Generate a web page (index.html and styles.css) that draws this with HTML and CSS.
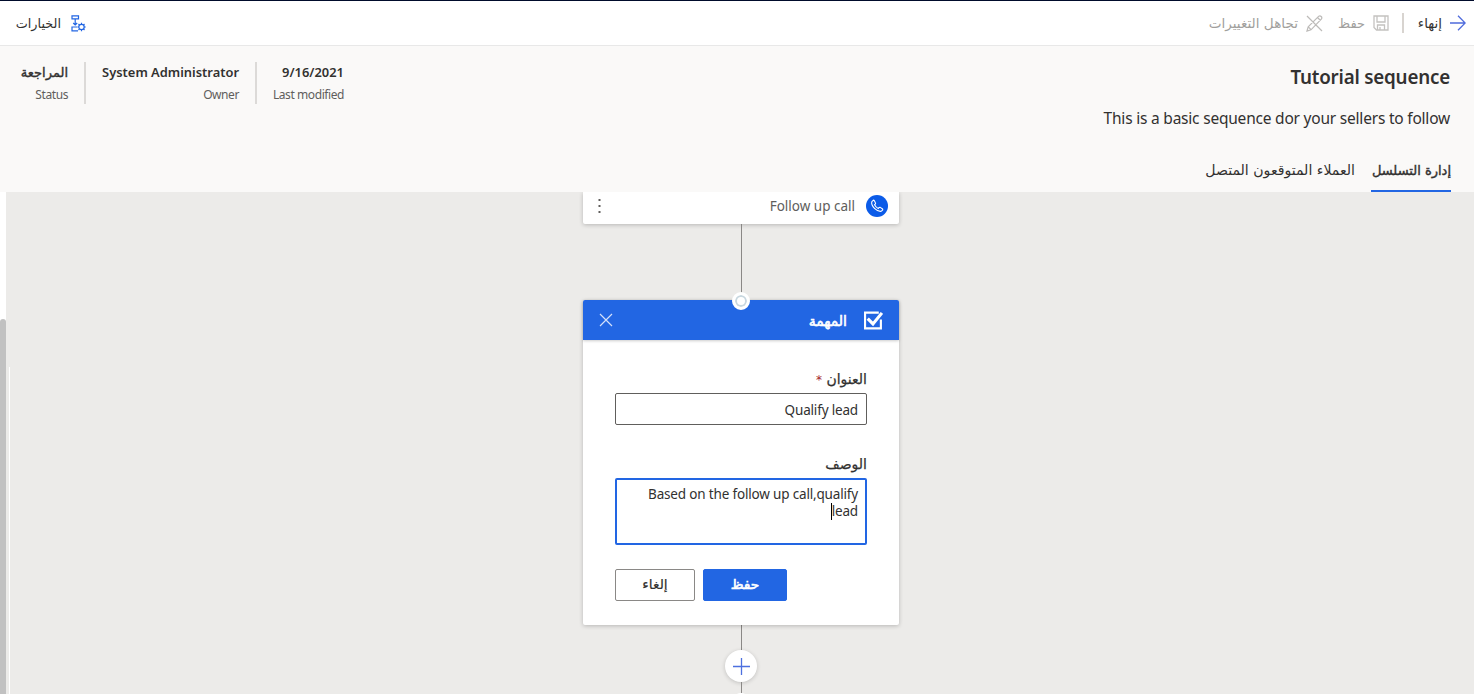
FILE: index.html
```html
<!DOCTYPE html>
<html lang="ar" dir="rtl">
<head>
<meta charset="utf-8">
<title>Tutorial sequence</title>
<link rel="stylesheet" href="styles.css">
</head>
<body>
<header class="toolbar">
  <div class="tools">
    <svg class="icon arrow" viewBox="0 0 16 16"><path d="M0 8H15M8 .8L15.200 8 8 15.200" fill="none" stroke="#4f6bdc" stroke-width="1.300"/></svg>
    <span class="label finish">إنهاء</span>
    <i class="tool-separator"></i>
    <svg class="icon save-icon" viewBox="0 0 16 16"><path d="M1 1h14v14H3.500L1 12.500zM4 1v6h8V1M4.500 15v-5h7v5M7 12v3" fill="none" stroke="#c4c2c0" stroke-width="1.300"/></svg>
    <span class="label save-label muted">حفظ</span>
    <svg class="icon discard-icon" viewBox="0 0 17 17"><path d="M1 1l15 15M1 16l1.200-4.200L12.800 1.200q1.300-.8 2.400.3t.3 2.400L5 14.800zM2.300 11.800l3 3M11.500 2.500l3 3" fill="none" stroke="#bdbbb9" stroke-width="1.200"/></svg>
    <span class="label discard-label muted">تجاهل التغييرات</span>
  </div>
  <div class="tools options">
    <svg class="icon options-icon" viewBox="0 0 16 17"><g fill="none" stroke="#2266e3" stroke-width="1.200"><path d="M1 .8h6.500v3H1zM4.200 4v6M2.200 8l2 2 2-2M6 12H1v3.800h6"/><circle cx="10.500" cy="12" r="2.700"/><path d="M10.500 7.800v1.500M10.500 14.700v1.500M6.300 12h1.500M13.200 12h1.500M7.500 9l1.100 1.100M12.400 13.900l1.100 1.100M13.500 9l-1.100 1.100M8.600 13.900L7.500 15"/></g></svg>
    <span class="label options-label">الخيارات</span>
  </div>
</header>

<section class="summary">
  <div class="heading">
    <h1 dir="ltr">Tutorial sequence</h1>
    <p dir="ltr">This is a basic sequence dor your sellers to follow</p>
    <nav class="tabs">
      <a class="tab active"><span>إدارة التسلسل</span></a>
      <a class="tab connected"><span>العملاء المتوقعون المتصل</span></a>
    </nav>
  </div>
  <div class="facts">
    <div class="fact modified"><b dir="ltr">9/16/2021</b><small>Last modified</small></div>
    <div class="fact owner"><b dir="ltr">System Administrator</b><small>Owner</small></div>
    <div class="fact status"><b class="status-value">المراجعة</b><small>Status</small></div>
  </div>
</section>

<main class="canvas">
  <div class="flow">
    <article class="card previous">
      <svg class="call-icon" viewBox="0 0 22 22"><circle cx="11" cy="11" r="11" fill="#0b5be8"/><path d="M7.200 5.300L5.800 6.700Q5 10 8.500 13.400T15.200 16.300L16.700 14.900Q17 14.200 16.300 13.700L14.200 12.400Q13.500 12.200 13 12.700L12.200 13.500Q10 12.500 8.500 9.800L9.400 8.900Q9.800 8.300 9.400 7.700L8.200 5.500Q7.700 5 7.200 5.300z" fill="none" stroke="#fff" stroke-width="1.100"/></svg>
      <span class="previous-title" dir="ltr">Follow up call</span>
      <svg class="more" viewBox="0 0 3 14"><path d="M.5 0h2v2h-2zM.5 6h2v2h-2zM.5 12h2v2h-2z" fill="#605e5c"/></svg>
    </article>
    <i class="connector"></i>
    <article class="card task">
      <i class="node"></i>
      <header class="task-head">
        <svg class="check-icon" viewBox="0 0 18 18"><path d="M14 1.500H1v15h15V8" fill="none" stroke="#fff" stroke-width="2"/><path d="M3.500 7.200l5 5L17 1.800" fill="none" stroke="#fff" stroke-width="3"/></svg>
        <strong class="task-title">المهمة</strong>
        <svg class="close" viewBox="0 0 14 14"><path d="M1 1l12 12M13 1L1 13" stroke="#d3e0fa" stroke-width="1.200"/></svg>
      </header>
      <div class="form">
        <label class="field-label">العنوان <em>*</em></label>
        <div class="input title-input"><span dir="ltr">Qualify lead</span></div>
        <label class="field-label second">الوصف</label>
        <div class="input area"><span dir="ltr">Based on the follow up call,qualify</span><span class="last-line" dir="ltr">lead</span></div>
        <div class="actions">
          <button class="button primary"><span>حفظ</span></button>
          <button class="button"><span>إلغاء</span></button>
        </div>
      </div>
    </article>
    <i class="connector short"></i>
    <div class="add"><svg viewBox="0 0 17 17"><path d="M0 8.500h17M8.500 0v17" stroke="#4d70df" stroke-width="1.300"/></svg></div>
    <i class="connector tail"></i>
    <i class="next-node"></i>
  </div>
  <i class="panel-line"></i>
  <aside class="scrollbar"><i class="thumb"></i></aside>
</main>
</body>
</html>
```
FILE: styles.css
```css
* { box-sizing: border-box; }
body { margin: 0; width: 1474px; height: 694px; overflow: hidden; display: flex; flex-direction: column; background: #faf9f8; color: #323130; font: 13.5px/20px "Noto Sans", "DejaVu Sans", sans-serif; }
svg { display: block; flex: none; }
i, em { font-style: normal; }

.toolbar { height: 46px; flex: none; display: flex; justify-content: space-between; background: #fff; border-top: 1px solid #000b2b; border-bottom: 1px solid #e8e8e8; padding: 0 8px 0 16px; }
.tools { display: flex; align-items: center; }
.icon { width: 16px; height: 16px; }
.label { white-space: nowrap; font: 13px/20px "DejaVu Sans", sans-serif; display: block; padding-top: 1px; }
.muted { color: #a19f9d; }
.finish { width: 24px; margin-right: 8px; padding-top: 0; font-size: 13.5px; }
.tool-separator { width: 2px; height: 20px; background: #d8d4d0; margin: 0 14px 0 13px; }
.save-label { width: 27px; margin-right: 8px; }
.discard-icon { width: 17px; height: 17px; margin-right: 15px; }
.discard-label { width: 90px; margin-right: 8px; padding-top: 0; font-size: 13.6px; }
.options-icon { width: 16px; height: 17px; margin-left: 10px; }
.options-label { width: 45px; font-size: 12.8px; }

.summary { height: 146px; flex: none; display: flex; justify-content: space-between; padding: 0 24px 0 20px; }
.heading { width: 360px; }
h1 { margin: 19px 0 0; font-size: 18.8px; letter-spacing: -.2px; line-height: 24px; font-weight: 600; text-align: right; white-space: nowrap; }
.heading p { margin: 18px 0 0; font-size: 15.5px; letter-spacing: -.21px; line-height: 22px; text-align: right; white-space: nowrap; }
.tabs { display: flex; gap: 16px; margin: 21px -1px 0 0; }
.tab { width: 80px; height: 42px; white-space: nowrap; font: 13px/42px "DejaVu Sans", sans-serif; }
.tab.active { border-bottom: 2px solid #2266e3; -webkit-text-stroke: .4px; }
.tab.connected { width: 151px; font-size: 14.1px; line-height: 40px; }
.facts { display: flex; height: 42px; margin-top: 16px; }
.fact { display: flex; flex-direction: column; text-align: right; direction: ltr; white-space: nowrap; }
.fact b { font-weight: 600; font-size: 12.9px; line-height: 20px; }
.fact small { font-size: 12px; line-height: 18px; margin-top: 4px; color: #605e5c; letter-spacing: -.42px; }
.modified { width: 89px; border-left: 2px solid #dcdad8; }
.owner { width: 171px; padding-right: 16px; border-left: 2px solid #dcdad8; }
.status { width: 64px; padding-right: 16px; }
.fact .status-value { font: 13px/22px "DejaVu Sans", sans-serif; height: 20px; -webkit-text-stroke: .4px; }

.canvas { position: relative; flex: 1; min-height: 0; background: #ecebe9; overflow: hidden; }
.flow { width: 316px; margin-left: 583px; margin-right: 575px; display: flex; flex-direction: column; align-items: center; }
.card { width: 316px; flex: none; background: #fff; border-radius: 2px; box-shadow: 0 1px 4px rgba(0,0,0,.22); }
.previous { height: 32px; display: flex; align-items: center; padding: 0 11px 4px 14px; border-radius: 0 0 2px 2px; }
.call-icon { width: 22px; height: 22px; }
.previous-title { margin-right: 11px; color: #605e5c; white-space: nowrap; }
.more { width: 3px; height: 14px; margin-right: auto; margin-left: 1px; }
.connector { width: 1px; height: 76px; flex: none; background: #8a8886; }
.task { position: relative; height: 325px; }
.node { position: absolute; left: 149px; top: -8px; width: 18px; height: 18px; border-radius: 50%; border: 3px solid #fff; background: #fff; box-shadow: inset 0 0 0 2px #c8d7df; }
.task-head { height: 40px; display: flex; align-items: center; padding: 0 16px 0 16px; background: #2266e3; color: #fff; border-radius: 2px 2px 0 0; box-shadow: 0 1px 3px rgba(0,0,0,.2); }
.check-icon { width: 19px; height: 19px; }
.task-title { margin-right: 17px; font: 14px/20px "DejaVu Sans", sans-serif; padding-top: 1px; -webkit-text-stroke: .6px; white-space: nowrap; }
.close { width: 14px; height: 14px; margin-right: auto; }
.form { padding: 29px 32px 0; }
.field-label { display: block; height: 20px; font: 14px/20px "DejaVu Sans", sans-serif; -webkit-text-stroke: .25px; }
.field-label em { color: #a4262c; font-size: 12px; -webkit-text-stroke: 0; }
.second { margin-top: 29px; }
.input { height: 32px; margin-top: 4px; border: 1px solid #605e5c; border-radius: 2px; padding: 7px 8px; display: flex; flex-direction: column; align-items: flex-start; font-size: 13.5px; letter-spacing: -.17px; line-height: 17px; white-space: nowrap; }
.title-input { padding-top: 8px; }
.input.area { height: 67px; border: 2px solid #2266e3; padding: 6px 7px; }
.last-line { border-left: 1px solid #000; }
.actions { display: flex; gap: 8px; margin-top: 24px; padding-right: 80px; }
.button { width: 80px; height: 32px; padding: 0 0 2px; border: 1px solid #8a8886; border-radius: 2px; background: #fff; color: #323130; font: 13.8px/28px "DejaVu Sans", sans-serif; -webkit-text-stroke: .2px; }
.primary { width: 84px; border-color: #2266e3; background: #2266e3; color: #fff; -webkit-text-stroke: .6px; }
.short { height: 25px; }
.add { width: 32px; height: 32px; flex: none; display: flex; align-items: center; justify-content: center; border-radius: 50%; background: #fff; box-shadow: 0 1px 4px rgba(0,0,0,.18); }
.add svg { width: 17px; height: 17px; }
.tail { height: 11px; }
.next-node { width: 18px; height: 18px; flex: none; border-radius: 50%; background: #fff; }
.panel-line { position: absolute; left: 9px; top: 175px; bottom: 0; width: 1px; background: #fff; }
.scrollbar { position: absolute; left: 0; top: 0; bottom: 0; width: 6px; background: #fff; }
.thumb { display: block; margin-top: 127px; height: 375px; background: #c1c1c1; border-radius: 3px 3px 0 0; }
```
